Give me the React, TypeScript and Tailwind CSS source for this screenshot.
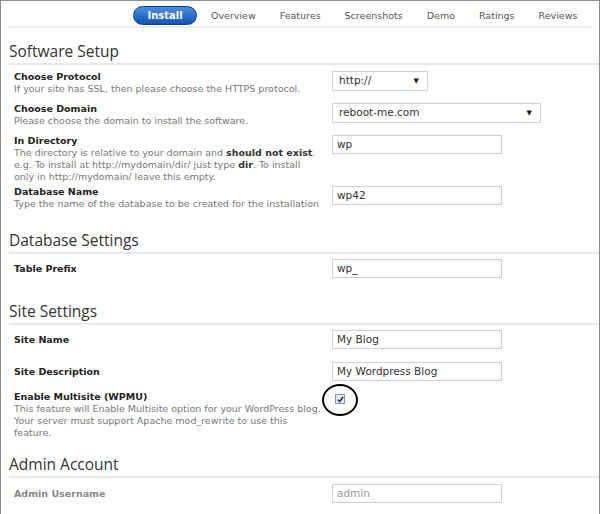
import React from 'react';

const tabs = ['Overview', 'Features', 'Screenshots', 'Demo', 'Ratings', 'Reviews'];

const Heading: React.FC<{ title: string }> = ({ title }) => (
  <div className="ml-[8px] border-b-2 border-[#e3ebf1] pb-[1px]">
    <h2 className="font-['Open_Sans',sans-serif] text-[15.5px] leading-[22px] text-[#333]">{title}</h2>
  </div>
);

const Row: React.FC<{ label: string; desc?: React.ReactNode; children?: React.ReactNode; className?: string; muted?: boolean }> = ({
  label,
  desc,
  children,
  className = '',
  muted,
}) => (
  <div className={`grid grid-cols-[318px_1fr] pl-[13px] ${className}`}>
    <div className="pr-[2px]">
      <div className={`font-bold text-[9.5px] leading-[12px] ${muted ? 'text-[#888]' : 'text-[#222]'}`}>{label}</div>
      {desc && <div className="text-[9.5px] leading-[12px] text-[#777]">{desc}</div>}
    </div>
    <div>{children}</div>
  </div>
);

const TextBox: React.FC<{ value: string; muted?: boolean }> = ({ value, muted }) => (
  <div
    className={`w-[170px] h-[19px] border border-[#cfcfcf] bg-white px-[4px] text-[10.5px] leading-[17px] ${
      muted ? 'text-[#999]' : 'text-[#333]'
    }`}
  >
    {value}
  </div>
);

const SelectBox: React.FC<{ value: string; width: string }> = ({ value, width }) => (
  <div className={`${width} h-[20px] border border-[#cfcfcf] bg-white pl-[6px] pr-[8px] flex items-center justify-between text-[10.5px] text-[#333]`}>
    <span>{value}</span>
    <span className="text-[7px] text-[#222]">▼</span>
  </div>
);

export default function App() {
  return (
    <div className="w-[600px] h-[514px] overflow-hidden bg-white border-t border-l border-r border-[#8c8c8c] font-['DejaVu_Sans',Verdana,sans-serif]">
      {/* tabs */}
      <div className="ml-[8px] mr-[8px] border-b-2 border-[#ececec] h-[27px] flex items-start pt-[5px]">
        <div className="ml-[124px] w-[64px] h-[19px] rounded-full border border-[#0d3f86] bg-gradient-to-b from-[#4a8fe0] to-[#1553b0] flex items-center justify-center text-white text-[10px] font-bold">
          Install
        </div>
        <div className="flex ml-[14px] gap-[24px] text-[9.5px] leading-[19px] text-[#555]">
          {tabs.map((t) => (
            <span key={t}>{t}</span>
          ))}
        </div>
      </div>

      <div className="mt-[12px]">
        <Heading title="Software Setup" />
      </div>

      <Row
        className="mt-[6px]"
        label="Choose Protocol"
        desc="If your site has SSL, then please choose the HTTPS protocol."
      >
        <SelectBox value="http://" width="w-[96px]" />
      </Row>
      <Row className="mt-[8px]" label="Choose Domain" desc="Please choose the domain to install the software.">
        <SelectBox value="reboot-me.com" width="w-[209px]" />
      </Row>
      <Row
        className="mt-[8px]"
        label="In Directory"
        desc={
          <>
            The directory is relative to your domain and <b className="text-[#333]">should not exist</b>.
            <br />
            e.g. To install at http://mydomain/dir/ just type <b className="text-[#333]">dir</b>. To install
            <br />
            only in http://mydomain/ leave this empty.
          </>
        }
      >
        <TextBox value="wp" />
      </Row>
      <Row
        className="mt-[3px]"
        label="Database Name"
        desc="Type the name of the database to be created for the installation"
      >
        <TextBox value="wp42" />
      </Row>

      <div className="mt-[19px]">
        <Heading title="Database Settings" />
      </div>
      <Row className="mt-[5px] items-center" label="Table Prefix">
        <TextBox value="wp_" />
      </Row>

      <div className="mt-[22px]">
        <Heading title="Site Settings" />
      </div>
      <Row className="mt-[5px] items-center" label="Site Name">
        <TextBox value="My Blog" />
      </Row>
      <Row className="mt-[13px] items-center" label="Site Description">
        <TextBox value="My Wordpress Blog" />
      </Row>
      <Row
        className="mt-[10px]"
        label="Enable Multisite (WPMU)"
        desc={
          <>
            This feature will Enable Multisite option for your WordPress blog.
            <br />
            Your server must support Apache mod_rewrite to use this
            <br />
            feature.
          </>
        }
      >
        <div className="relative w-[40px] h-[20px]">
          <div className="absolute left-[3px] top-[3px] w-[10px] h-[10px] border border-[#7a97c4] bg-[#dfe8f6] flex items-center justify-center">
            <svg width="7" height="7" viewBox="0 0 8 8">
              <path d="M1 4.2 L3.1 6.3 L7 1.2" fill="none" stroke="#222" strokeWidth="1.6" />
            </svg>
          </div>
          <div className="absolute left-[-10px] top-[-7px] w-[36px] h-[32px] rounded-[50%] border-2 border-black" />
        </div>
      </Row>

      <div className="mt-[14px]">
        <Heading title="Admin Account" />
      </div>
      <Row className="mt-[6px] items-center" label="Admin Username" muted>
        <TextBox value="admin" muted />
      </Row>
    </div>
  );
}
